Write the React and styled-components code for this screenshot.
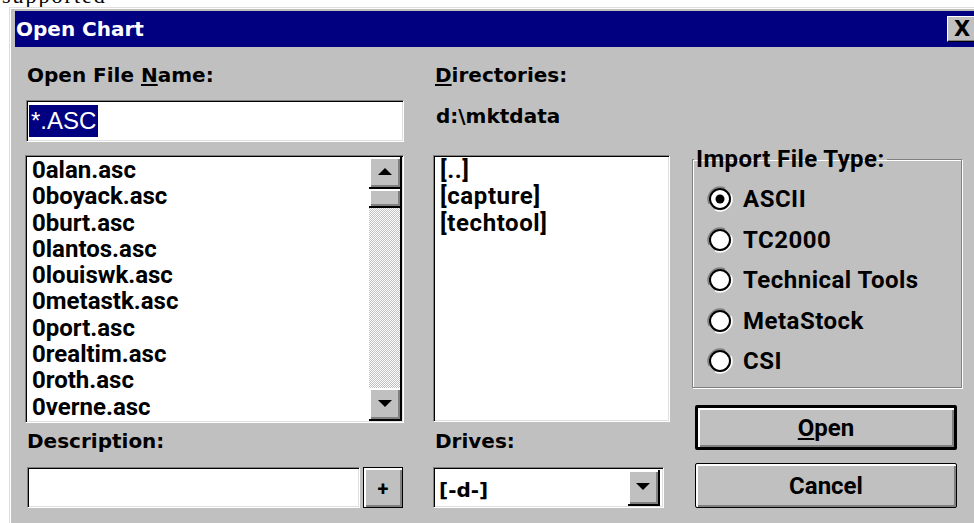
import React from 'react'
import styled, { createGlobalStyle, css } from 'styled-components'

const SYS = `'Roboto', 'Liberation Sans', Arial, sans-serif`
const DLG = `'DejaVu Sans', Verdana, sans-serif`

const GlobalStyle = createGlobalStyle`
  html, body { margin: 0; padding: 0; background: #fff; }
  body { overflow: hidden; }
  #root { width: 974px; height: 523px; overflow: hidden; }
`

const sunken = css`
  border: 1px solid;
  border-color: #808080 #fff #fff #808080;
  box-shadow: inset 1px 1px #000, inset -1px -1px #dfdfdf;
`

const raised = css`
  background: #c0c0c0;
  box-shadow: inset 2px 2px #fff, inset -2px -2px #808080;
`

// strip of the page above the dialog, only the foot of its line shows
const Edge = styled.div`
  height: 7px;
  overflow: hidden;
  padding-left: 2px;
`
const EdgeText = styled.div`
  margin-top: -16px;
  font: 22px/24px 'Liberation Serif', serif;
  letter-spacing: 2px;
  color: #000;
  white-space: nowrap;
`

const Window = styled.div`
  margin-left: 9px;
  width: 978px;
  height: 530px;
  box-sizing: border-box;
  padding: 3px 5px 0;
  background: #c0c0c0;
  border: 1px solid;
  border-color: #dfdfdf #404040 #404040 #dfdfdf;
  box-shadow: inset 1px 1px #fff;
`

const TitleBar = styled.div`
  height: 36px;
  background: #000080;
  display: flex;
  align-items: center;
  justify-content: space-between;
  padding: 0 4px 0 1px;
`
const Title = styled.span`
  font: bold 20px/36px ${DLG};
  color: #fff;
`
const CloseBox = styled.div`
  width: 30px;
  height: 26px;
  box-sizing: border-box;
  background: #c0c0c0;
  border: 1px solid;
  border-color: #fff #000 #000 #fff;
  box-shadow: inset -1px -1px #808080;
  display: flex;
  align-items: center;
  justify-content: center;
  font: bold 21px/1 ${DLG};
  color: #000;
`

const Body = styled.div`
  display: flex;
  align-items: flex-start;
  padding: 16px 0 0 10px;
`
const Column = styled.div`
  display: flex;
  flex-direction: column;
  width: ${p => p.$w}px;
  margin-right: ${p => p.$gap || 0}px;
`

const Label = styled.div`
  height: 24px;
  margin-top: ${p => p.$top || 0}px;
  padding-left: 2px;
  font: bold 20px/24px ${DLG};
  color: #000;
  white-space: nowrap;
`
const Key = styled.span`
  text-decoration: underline;
  text-underline-offset: 2px;
`

const Field = styled.div`
  ${sunken};
  box-sizing: border-box;
  width: ${p => p.$w}px;
  height: ${p => p.$h}px;
  margin: ${p => p.$top || 0}px 0 0 ${p => p.$left || 0}px;
  padding: 4px 0 0 2px;
  background: #fff;
`
const Selection = styled.span`
  display: inline-block;
  padding: 0 2px;
  background: #000080;
  color: #fff;
  font: 24px/32px 'Liberation Sans', Arial, sans-serif;
`

const PathText = styled.div`
  height: 42px;
  margin-top: 13px;
  box-sizing: border-box;
  padding: 4px 0 0 3px;
  font: bold 20px/24px ${DLG};
  color: #000;
`

const ListBox = styled.div`
  ${sunken};
  box-sizing: border-box;
  height: ${p => p.$h}px;
  margin-top: 13px;
  padding: 1px;
  background: #fff;
  display: flex;
`
const Items = styled.ul`
  flex: 1;
  margin: 0;
  padding: 0 0 0 ${p => p.$indent}px;
  list-style: none;
`
const Item = styled.li`
  font: bold 24px/26.3px ${SYS};
  letter-spacing: ${p => p.$track || 0}px;
  color: #000;
  white-space: nowrap;
`

const ScrollBar = styled.div`
  width: 33px;
  box-sizing: border-box;
  display: flex;
  flex-direction: column;
  border-right: 2px solid #000;
  background: repeating-conic-gradient(#c0c0c0 0% 25%, #fff 0% 50%) 0 0 / 2px 2px;
`
const ScrollPart = styled.div`
  ${raised};
  height: ${p => p.$h}px;
  box-sizing: border-box;
  border-bottom: 2px solid #000;
  display: flex;
  align-items: center;
  justify-content: center;
`
const Track = styled.div`
  flex: 1;
`

const Row = styled.div`
  display: flex;
  margin-top: ${p => p.$top || 0}px;
`
const SmallButton = styled.div`
  ${raised};
  width: 40px;
  height: 41px;
  margin-left: 3px;
  box-sizing: border-box;
  border: 1px solid #000;
  display: flex;
  align-items: center;
  justify-content: center;
  padding-top: 3px;
  font: bold 20px/1 ${SYS};
  color: #000;
`

const Combo = styled.div`
  ${sunken};
  box-sizing: border-box;
  width: 231px;
  height: 41px;
  margin-top: 14px;
  padding: 1px;
  background: #fff;
  display: flex;
`
const ComboText = styled.div`
  flex: 1;
  padding: 9px 0 0 4px;
  font: bold 20px/24px ${DLG};
  color: #000;
`
const ComboArrow = styled.div`
  ${raised};
  width: 32px;
  height: 36px;
  margin: 1px 2px 0 0;
  box-sizing: border-box;
  border-right: 2px solid #000;
  border-bottom: 2px solid #000;
  display: flex;
  align-items: center;
  justify-content: center;
`

const Group = styled.fieldset`
  width: 270px;
  height: 241px;
  box-sizing: border-box;
  margin: 84px 0 0 2px;
  padding: 0;
  min-width: 0;
  border: 1px solid #808080;
  box-shadow: inset 1px 1px #fff, 1px 1px #fff;
`
const Legend = styled.legend`
  margin-left: 1px;
  padding: 0 2px;
  font: bold 24px/24px ${SYS};
  letter-spacing: 0.4px;
  color: #000;
`
const Options = styled.div`
  padding-top: 8px;
`
const Option = styled.label`
  height: 40.5px;
  padding-left: 14px;
  display: flex;
  align-items: center;
  font: bold 24px/1 ${SYS};
  letter-spacing: 0.5px;
  color: #000;
`
const OptionText = styled.span`
  margin-left: 10px;
`

const PushButton = styled.div`
  ${raised};
  width: 262px;
  height: 45px;
  margin: ${p => p.$top}px 0 0 5px;
  box-sizing: border-box;
  border: ${p => (p.$default ? 3 : 1)}px solid #000;
  border-radius: 2px;
  display: flex;
  align-items: center;
  justify-content: center;
  font: bold 24px/1 ${SYS};
  color: #000;
`

const Arrow = ({ down }) => (
  <svg width="14" height="8" viewBox="0 0 14 8">
    <polygon points={down ? '0,0 14,0 7,7' : '7,0 14,7 0,7'} fill="#000" />
  </svg>
)

const RadioDot = ({ on }) => (
  <svg width="26" height="26" viewBox="0 0 26 26">
    <path d="M2.2 18 A12 12 0 0 1 18 2.2" fill="none" stroke="#808080" strokeWidth="1.6" />
    <path d="M8 23.8 A12 12 0 0 0 23.8 8" fill="none" stroke="#fff" strokeWidth="1.6" />
    <circle cx="13" cy="13" r="10" fill="#fff" stroke="#000" strokeWidth="2" />
    {on && <circle cx="13" cy="13" r="4.5" fill="#000" />}
  </svg>
)

const files = [
  '0alan.asc', '0boyack.asc', '0burt.asc', '0lantos.asc', '0louiswk.asc',
  '0metastk.asc', '0port.asc', '0realtim.asc', '0roth.asc', '0verne.asc',
]
const dirs = ['[..]', '[capture]', '[techtool]']
const types = ['ASCII', 'TC2000', 'Technical Tools', 'MetaStock', 'CSI']

export default function App() {
  return (
    <>
      <GlobalStyle />
      <Edge>
        <EdgeText>supported</EdgeText>
      </Edge>
      <Window>
        <TitleBar>
          <Title>Open Chart</Title>
          <CloseBox>X</CloseBox>
        </TitleBar>
        <Body>
          <Column $w={379} $gap={29}>
            <Label>Open File <Key>N</Key>ame:</Label>
            <Field $w={378} $h={42} $top={13} $left={1}>
              <Selection>*.ASC</Selection>
            </Field>
            <ListBox $h={268}>
              <Items $indent={5}>
                {files.map(f => <Item key={f}>{f}</Item>)}
              </Items>
              <ScrollBar>
                <ScrollPart $h={32}><Arrow /></ScrollPart>
                <ScrollPart $h={19} />
                <Track />
                <ScrollPart $h={33}><Arrow down /></ScrollPart>
              </ScrollBar>
            </ListBox>
            <Label $top={6}>Description:</Label>
            <Row $top={14}>
              <Field $w={333} $h={41} $left={2} />
              <SmallButton>+</SmallButton>
            </Row>
          </Column>

          <Column $w={237} $gap={20}>
            <Label><Key>D</Key>irectories:</Label>
            <PathText>d:\mktdata</PathText>
            <ListBox $h={267}>
              <Items $indent={5}>
                {dirs.map(d => <Item key={d} $track={0.6}>{d}</Item>)}
              </Items>
            </ListBox>
            <Label $top={7}>Drives:</Label>
            <Combo>
              <ComboText>[-d-]</ComboText>
              <ComboArrow><Arrow down /></ComboArrow>
            </Combo>
          </Column>

          <Column $w={272}>
            <Group>
              <Legend>Import File Type:</Legend>
              <Options>
                {types.map((t, i) => (
                  <Option key={t}>
                    <RadioDot on={i === 0} />
                    <OptionText>{t}</OptionText>
                  </Option>
                ))}
              </Options>
            </Group>
            <PushButton $top={17} $default><span><Key>O</Key>pen</span></PushButton>
            <PushButton $top={13}>Cancel</PushButton>
          </Column>
        </Body>
      </Window>
    </>
  )
}
